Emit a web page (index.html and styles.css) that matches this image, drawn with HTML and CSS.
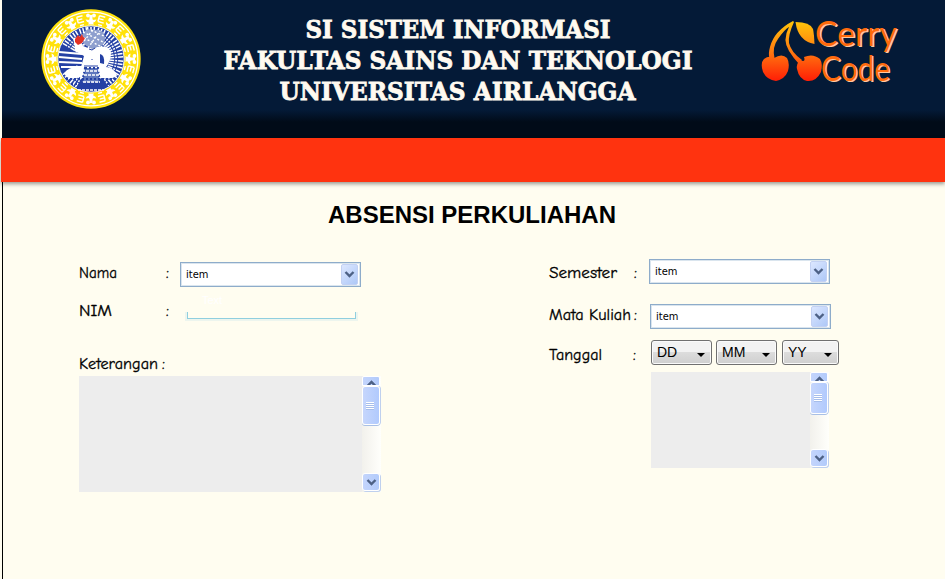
FILE: index.html
```html
<!DOCTYPE html>
<html lang="id">
<head>
<meta charset="utf-8">
<title>Absensi Perkuliahan</title>
<link rel="stylesheet" href="styles.css">
</head>
<body>
<header class="header">
  <svg class="emblem" viewBox="-50 -50 100 100" width="100" height="100">
    <defs>
      <g id="motif">
        <circle cx="-3" cy="-43.500" r="1.900"/><circle cx="3" cy="-43.500" r="1.900"/>
        <path d="M-5.500-39.500Q-4-36-1.500-37L-3-34.500H3L1.500-37Q4-36 5.500-39.500L1.500-39V-44H-1.500V-39Z"/>
        <circle cx="0" cy="-37.500" r="2.600"/>
      </g>
      <path id="bars" d="M-3-44H3M-3-41H2M-3-38H3M-2-35H2M-3-44V-38" fill="none" stroke="#fff" stroke-width="1.4"/>
      <g id="rays" stroke="#fff" stroke-width="1.500">
        <path d="M0-32V-15M3.400-32L2-15M-3.400-32L-2-15" stroke-dasharray="5 1 2 1"/>
      </g>
    </defs>
    <circle r="49.700" fill="#ffe10a"/>
    <circle r="46.800" fill="none" stroke="#fff" stroke-width="1.2"/>
    <g fill="#fff">
      <use href="#motif"/><use href="#motif" transform="rotate(30)"/><use href="#motif" transform="rotate(60)"/><use href="#motif" transform="rotate(90)"/><use href="#motif" transform="rotate(120)"/><use href="#motif" transform="rotate(150)"/><use href="#motif" transform="rotate(180)"/><use href="#motif" transform="rotate(210)"/><use href="#motif" transform="rotate(240)"/><use href="#motif" transform="rotate(270)"/><use href="#motif" transform="rotate(300)"/><use href="#motif" transform="rotate(330)"/>
    </g>
    <use href="#bars" transform="rotate(15)"/><use href="#bars" transform="rotate(45)"/><use href="#bars" transform="rotate(75)"/><use href="#bars" transform="rotate(105)"/><use href="#bars" transform="rotate(135)"/><use href="#bars" transform="rotate(165)"/><use href="#bars" transform="rotate(195)"/><use href="#bars" transform="rotate(225)"/><use href="#bars" transform="rotate(255)"/><use href="#bars" transform="rotate(285)"/><use href="#bars" transform="rotate(315)"/><use href="#bars" transform="rotate(345)"/>
    <circle r="33.200" fill="#2440a4" stroke="#fff" stroke-width="1"/>
    <use href="#rays" transform="rotate(20)"/><use href="#rays" transform="rotate(40)"/><use href="#rays" transform="rotate(60)"/><use href="#rays" transform="rotate(80)"/><use href="#rays" transform="rotate(100)"/><use href="#rays" transform="rotate(120)"/><use href="#rays" transform="rotate(140)"/><use href="#rays" transform="rotate(215)"/><use href="#rays" transform="rotate(235)"/><use href="#rays" transform="rotate(305)"/><use href="#rays" transform="rotate(325)"/><use href="#rays" transform="rotate(345)"/><use href="#rays"/>
    <path d="M-32-7L-9-5M-32-2L-9 0M-32 3L-9 4M-30 8L-9 8" stroke="#fff" stroke-width="2"/>
    <path d="M-16-12L-18-21L-12-22L-8-13L-3-11L5-12Q17-14 20-7Q20 2 15 8Q24 9 26 17Q20 21 10 19L6 23H-6L-11 18Q-23 23-27 14Q-22 7-10 8L-7-3L-16-8Z" fill="#fff"/>
    <path d="M9-5Q14-4 13 5L9 4Z" fill="#2440a4"/>
    <path d="M-9-24Q-5-32 3-29Q14-31 14-20Q13-12 6-12Q2-8-2-12Q-9-14-9-24Z" fill="#8e9fce"/>
    <path d="M-8-27L12-17M-7-21L9-13M0-29L13-23M-3-11L9-28M-7-18L2-29" stroke="#fff" stroke-width="1.400" stroke-dasharray="2 2"/>
    <path d="M-6 9H7L9 24H-9ZM-25 20L25 20M-20 25H20M-14 29H14" fill="#6078bd" stroke="#2440a4" stroke-width="2" stroke-dasharray="2 2"/>
    <path d="M-9 12H9M-7 16H8M-8 23H9M-13 31H13" stroke="#fff" stroke-width="1.500" stroke-dasharray="3 1"/>
    <path d="M-2-10L1-9L4-11M1 0V1M-7 7L7 7" stroke="#2440a4" fill="none"/>
    <path d="M-16-20L-13-24L-11-22L-9-25L-8-22L-6-21L-9-16L-13-14L-16-17Z" fill="#e33125"/>
  </svg>
  <svg class="title" viewBox="0 0 480 112" width="480" height="112">
    <text x="85.500" y="37.500" textLength="305" lengthAdjust="spacingAndGlyphs">SI SISTEM INFORMASI</text>
    <text x="3.500" y="69" textLength="469" lengthAdjust="spacingAndGlyphs">FAKULTAS SAINS DAN TEKNOLOGI</text>
    <text x="59.500" y="100" textLength="356" lengthAdjust="spacingAndGlyphs">UNIVERSITAS AIRLANGGA</text>
  </svg>
  <svg class="brand" viewBox="0 0 145 80" width="145" height="80">
    <defs>
      <linearGradient id="fruit" gradientUnits="userSpaceOnUse" x1="0" y1="6" x2="0" y2="67">
        <stop offset="0" stop-color="#ffc60a"/><stop offset=".5" stop-color="#ff7910"/><stop offset="1" stop-color="#ff1a05"/>
      </linearGradient>
    </defs>
    <g fill="url(#fruit)">
      <path d="M33 6Q14 16 10 32Q8 39 9.500 43H14.500Q12 32 18 24Q25 14 29 12Q22 25 29 36Q34 44 39 49L42 45Q31 37 29 28Q28 20 34 7Z"/>
      <path d="M35.500 7Q50 7 53 14Q54 18 54.500 29Q38 26 35.500 7Z"/>
      <path d="M4 44Q9 40 14 43Q22 38 27 43Q30 48 28 56Q25 64 16 66Q7 65 3 57Q0 48 4 44Z"/>
      <path d="M40 45Q46 48 44 42Q53 38 60 44Q63 49 61 57Q56 67 47 66Q39 64 37 54Q36 49 40 45Z"/>
    </g>
    <text x="55" y="31" textLength="82" lengthAdjust="spacingAndGlyphs">Cerry</text>
    <text x="61" y="66" textLength="69" lengthAdjust="spacingAndGlyphs">Code</text>
  </svg>
</header>
<nav class="navbar"></nav>
<main class="page">
  <svg class="heading" viewBox="0 0 300 40" width="300" height="40"><text x="8" y="27" textLength="288" lengthAdjust="spacingAndGlyphs">ABSENSI PERKULIAHAN</text></svg>
  <div class="columns">
    <section class="left">
      <div class="row">
        <svg class="label" width="101" height="25"><text x="0" y="16" textLength="38" lengthAdjust="spacingAndGlyphs">Nama</text><text x="87" y="16">:</text></svg>
        <div class="combo"><span>item</span><i class="drop"><svg width="11" height="9"><path d="M1.500 2L5.500 6L9.500 2"/></svg></i></div>
      </div>
      <div class="row row-nim">
        <svg class="label" width="101" height="34"><text x="0" y="29" textLength="33" lengthAdjust="spacingAndGlyphs">NIM</text><text x="87" y="29">:</text></svg>
        <div class="field"><span class="ghost">Text</span><div class="line"></div></div>
      </div>
      <svg class="label note" width="101" height="24"><text x="0" y="17" textLength="79" lengthAdjust="spacingAndGlyphs">Keterangan</text><text x="83" y="17">:</text></svg>
      <div class="area area-note">
        <div class="scroll"><i class="cap"><svg width="11" height="9"><path d="M1.500 7L5.500 3L9.500 7"/></svg></i><i class="thumb"><b></b></i><i class="track"></i><i class="cap down"><svg width="11" height="9"><path d="M1.500 2L5.500 6L9.500 2"/></svg></i></div>
      </div>
    </section>
    <section class="right">
      <div class="row">
        <svg class="label" width="100" height="25"><text x="0" y="19" textLength="68" lengthAdjust="spacingAndGlyphs">Semester</text><text x="85" y="19">:</text></svg>
        <div class="combo"><span>item</span><i class="drop"><svg width="11" height="9"><path d="M1.500 2L5.500 6L9.500 2"/></svg></i></div>
      </div>
      <div class="row row-course">
        <svg class="label" width="101" height="25"><text x="0" y="16" textLength="82" lengthAdjust="spacingAndGlyphs">Mata Kuliah</text><text x="85" y="16">:</text></svg>
        <div class="combo"><span>item</span><i class="drop"><svg width="11" height="9"><path d="M1.500 2L5.500 6L9.500 2"/></svg></i></div>
      </div>
      <div class="row row-date">
        <svg class="label" width="102" height="25"><text x="0" y="20" textLength="53" lengthAdjust="spacingAndGlyphs">Tanggal</text><text x="84" y="20">:</text></svg>
        <div class="dates"><div class="btn">DD<i></i></div><div class="btn">MM<i></i></div><div class="btn btn-year">YY<i></i></div></div>
      </div>
      <div class="area area-date">
        <div class="scroll"><i class="cap"><svg width="11" height="9"><path d="M1.500 7L5.500 3L9.500 7"/></svg></i><i class="thumb"><b></b></i><i class="track"></i><i class="cap down"><svg width="11" height="9"><path d="M1.500 2L5.500 6L9.500 2"/></svg></i></div>
      </div>
    </section>
  </div>
</main>
</body>
</html>
```
FILE: styles.css
```css
* { box-sizing: border-box; }
body { margin: 0; background: #fffdf0; overflow: hidden; height: 579px; }
svg { display: block; flex: none; overflow: visible; }
.header {
  display: flex; align-items: flex-start; height: 138px; margin-left: 2px;
  background: linear-gradient(#041a37 0 110px, #010b18 122px, #010b18);
}
.emblem { margin: 9px 0 0 39px; }
.title { margin-left: 79px; }
.title text { font: bold 24.5px "DejaVu Serif", serif; fill: #fffaf0; stroke: #fffaf0; stroke-width: .8px; }
.brand { margin: 15px 0 0 60px; }
.brand text { font: 34px Lato, sans-serif; fill: #ff6a0c; text-shadow: 1.5px .5px #ffc8a0; }
.navbar {
  position: relative; height: 44px; margin-left: 1px;
  background: #ff330f; box-shadow: 0 2px 4px rgba(0, 0, 0, .4);
}
.page { height: 397px; margin-left: 2px; border-left: 1px solid #000; }
.heading { margin-left: 317px; transform: translateY(14px); }
.heading text { font: bold 24px "Liberation Sans", Arial, sans-serif; }
.columns { display: flex; padding-top: 37px; }
.left { width: 302px; margin-left: 76px; padding-top: 3px; }
.right { width: 291px; margin-left: 168px; }
.row { display: flex; align-items: flex-start; }
.label text {
  font: 16px "Comic Sans MS", "Comic Neue", Lato, sans-serif;
  stroke: #000; stroke-width: .3px;
}
.combo {
  display: flex; align-items: center; justify-content: space-between;
  width: 181px; height: 25px; padding: 0 2px 0 5px; margin-top: 0;
  border: 1px solid #8eacca; box-shadow: inset 0 0 0 1px #dae5ee; background: #fff;
  font: 11px "DejaVu Sans Condensed", "DejaVu Sans", sans-serif;
}
.left .combo { width: 181px; }
.drop {
  display: flex; align-items: center; justify-content: center;
  width: 17px; height: 21px; border: 1px solid #c3d1f3; border-radius: 2px;
  background: linear-gradient(135deg, #dce7ff, #aec8f7);
}
.drop path, .cap path { fill: none; stroke: #4d6185; stroke-width: 2.4; }
.row-nim { height: 62px; }
.field { width: 174px; margin-left: 5px; padding-top: 7px; }
.ghost { display: block; height: 17px; margin-left: 17px; font: 11px/13px "Liberation Sans", sans-serif; color: #fff; }
.line {
  height: 7px; width: 169px; margin: 1px 0 0 2px; border: 1px solid #90cfdf; border-top: 0;
  box-shadow: 0 0 0 2px #edf5ee; background: #fffdf0; clip-path: inset(0 -2px -2px -2px);
}
.note { margin-top: 3px; }
.area { display: flex; justify-content: flex-end; background: #ededed; }
.area-note { width: 302px; height: 116px; }
.scroll {
  display: flex; flex-direction: column; width: 19px; height: 100%; padding-right: 1px;
  background: linear-gradient(90deg, #f2f1ec, #fffffb);
}
.cap {
  display: flex; justify-content: center; align-items: flex-start; height: 10px; padding-top: 2px; overflow: hidden;
  border: 1px solid #fff; background: linear-gradient(90deg, #c4d5fc, #b2cbfb); border-radius: 2px 2px 0 0;
}
.thumb {
  display: flex; align-items: center; justify-content: center; height: 39px; padding-right: 3px;
  border: 1px solid #fff; border-radius: 3px; box-shadow: 0 1px #a9c0e5, 1px 0 #bfd0ee;
  background: linear-gradient(90deg, #c6d6fc, #b1cafd);
}
.thumb b { width: 8px; height: 8px; background: repeating-linear-gradient(#fff 0 1px, #a6bdea 1px 2px); }
.track { flex: 1; }
.down { height: 18px; margin-bottom: 1px; align-items: center; padding: 0; border-radius: 3px; box-shadow: 1px 1px #bfd0ee; }
.row-course { padding-top: 20px; }
.row-date { padding-top: 11px; }
.dates { display: flex; gap: 4px; }
.btn {
  display: flex; justify-content: space-between; align-items: center; width: 61px; height: 25px; padding: 0 6px 1px 5px;
  border: 1px solid #707070; border-radius: 3px; box-shadow: inset 0 0 0 1px #fafafa;
  background: linear-gradient(#f2f2f2 0 50%, #dcdcdc 50%, #cfcfcf);
  font: 14px "Liberation Sans", sans-serif;
}
.btn i { border: 4px solid transparent; border-top-color: #000; border-bottom: 0; margin-top: 5px; }
.btn-year { width: 57px; margin-left: 1px; }
.area-date { width: 178px; height: 96px; margin: 7px 0 0 102px; }
.area-date .thumb { height: 32px; }
```
